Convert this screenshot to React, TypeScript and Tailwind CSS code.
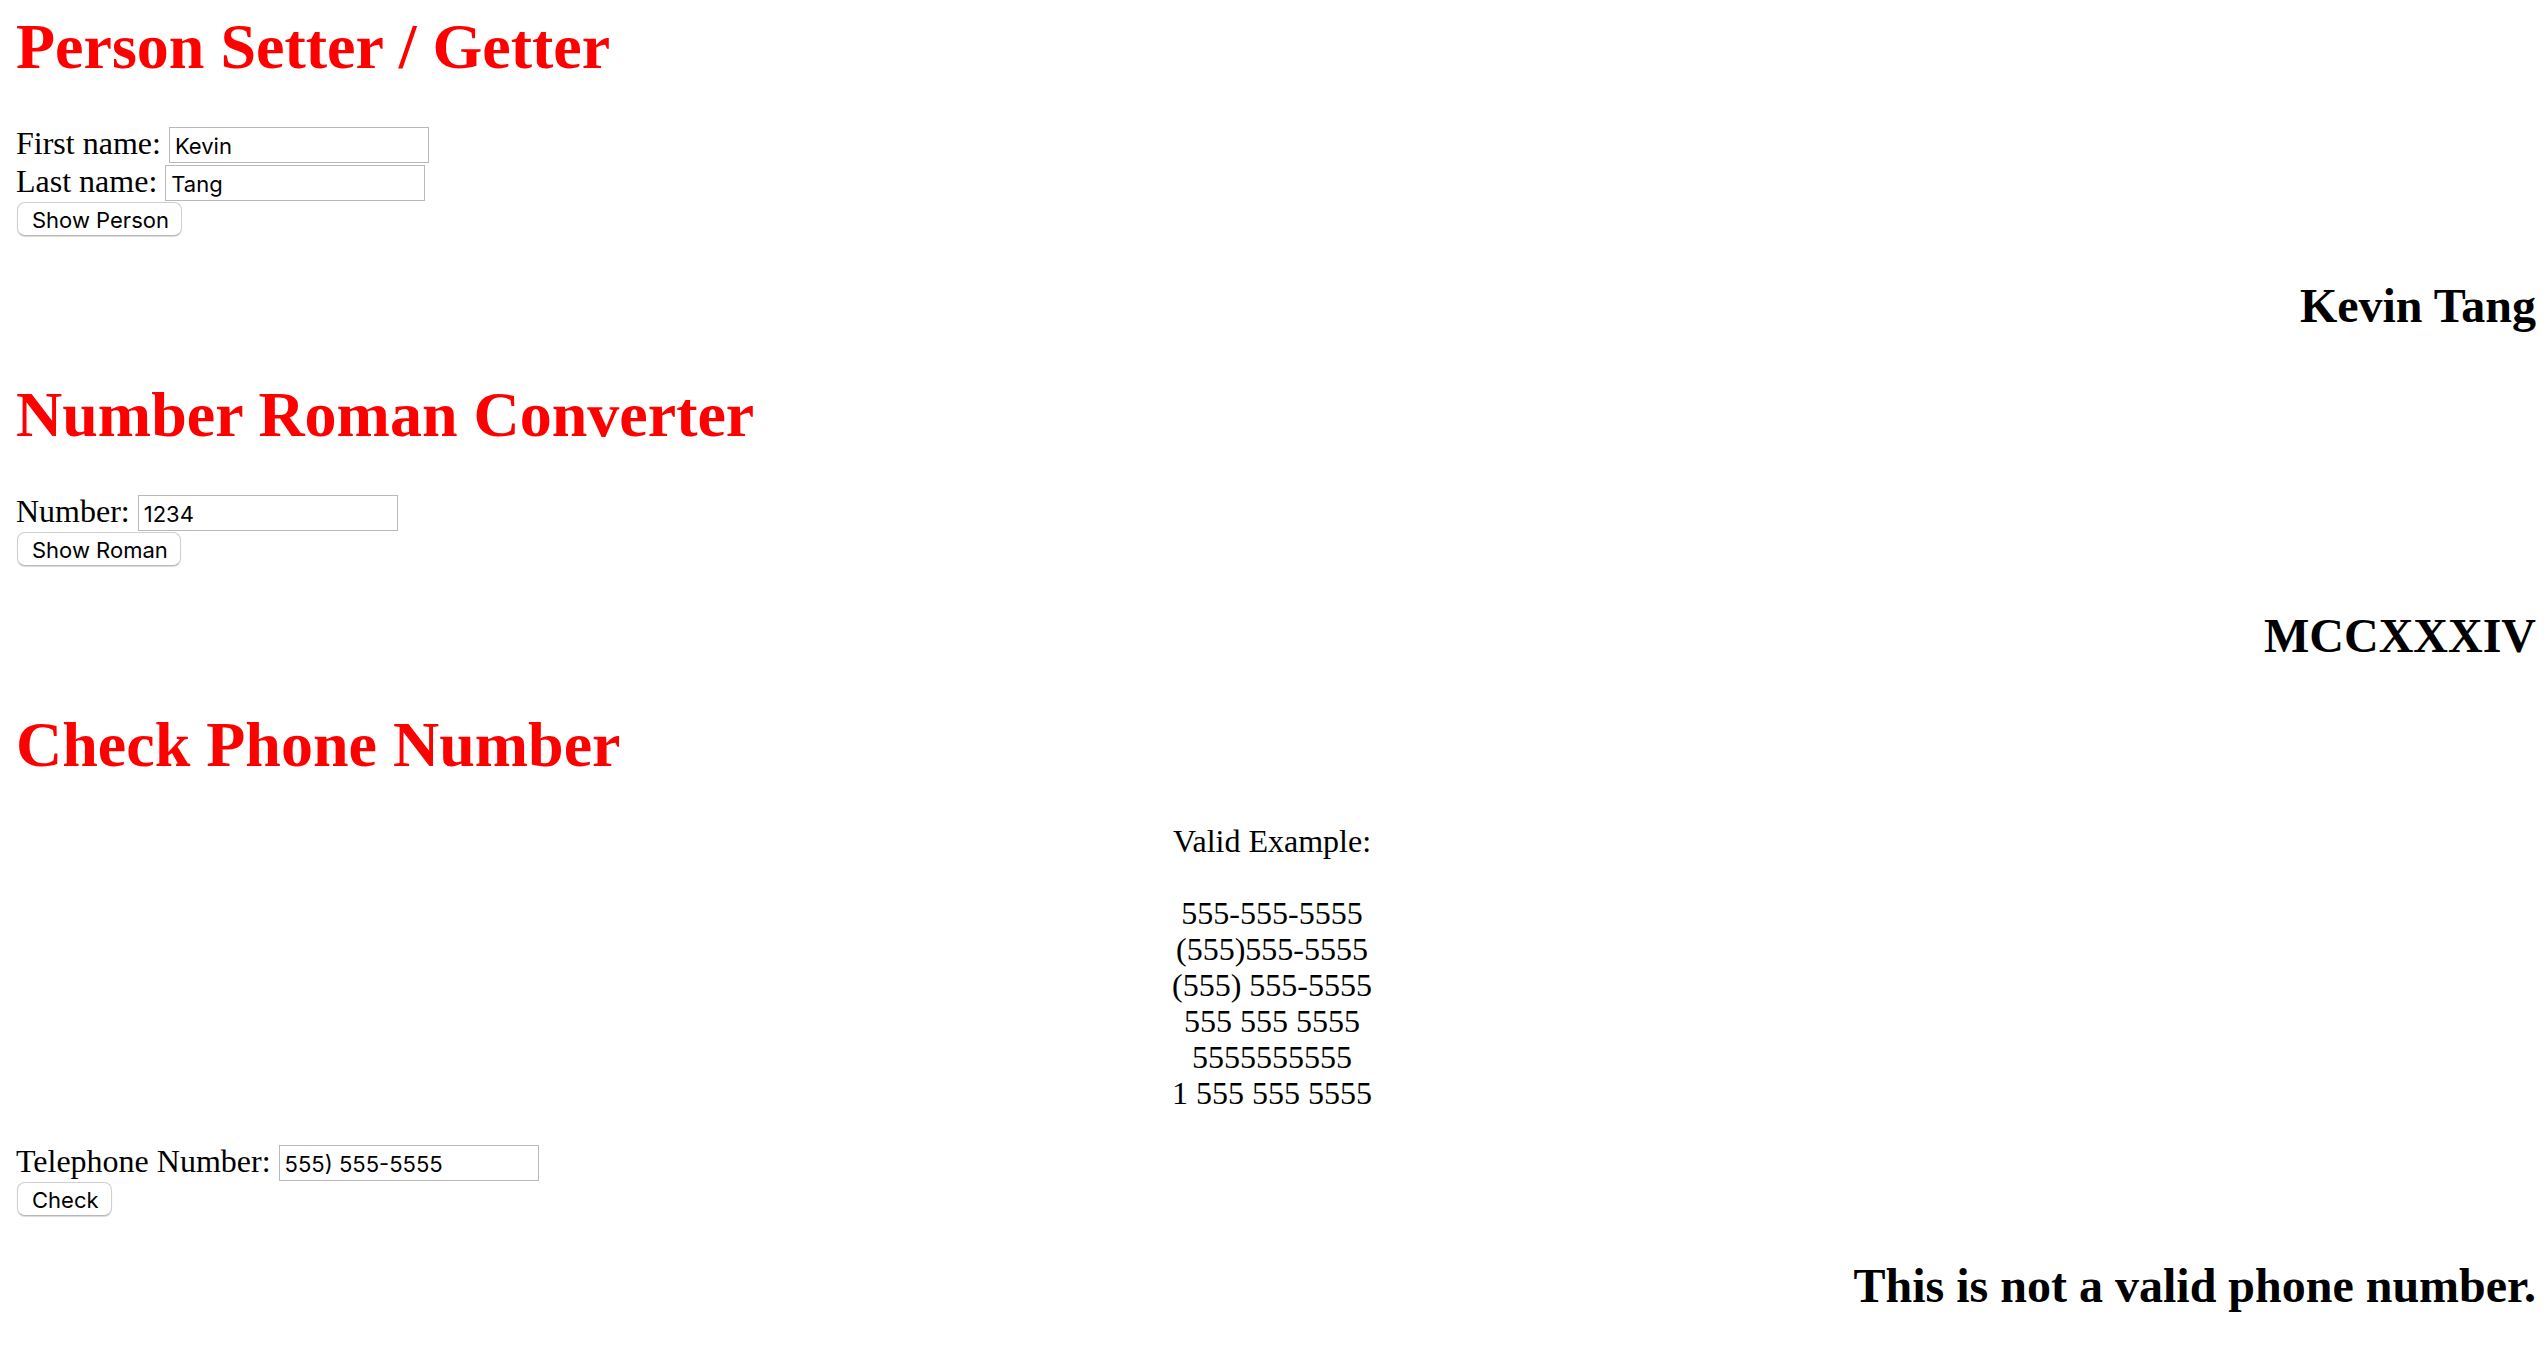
import { useState } from "react";
import type { ReactNode } from "react";

function Title({ children }: { children: ReactNode }) {
  return <h1 className="text-[64px] leading-[72px] font-bold text-[#ff0000]">{children}</h1>;
}

function Result({ children }: { children: ReactNode }) {
  return <h2 className="mt-[43px] mb-[46px] text-right text-5xl leading-[54px] font-bold">{children}</h2>;
}

function Field({ id, label, initial }: { id: string; label: string; initial: string }) {
  const [value, setValue] = useState(initial);
  return (
    <div className="flex h-[38px] items-center gap-2">
      <label htmlFor={id} className="pb-1 leading-9">
        {label}
      </label>
      <input
        id={id}
        type="text"
        value={value}
        onChange={(e) => setValue(e.target.value)}
        className="h-9 w-[260px] border border-[#b9b9b9] bg-white pt-0.5 pl-[5px] font-['Inter',sans-serif] text-[22px] text-black"
      />
    </div>
  );
}

function Action({ children }: { children: ReactNode }) {
  return (
    <button
      type="button"
      className="ml-px flex h-[34px] items-center rounded-lg border border-[#d0d0d0] border-b-[#b8b8b8] bg-white pt-0.5 pr-3 pl-[14px] font-['Inter',sans-serif] text-[22px] text-black shadow-[0_1px_1px_rgba(0,0,0,0.15)]"
    >
      {children}
    </button>
  );
}

const examples = [
  "555-555-5555",
  "(555)555-5555",
  "(555) 555-5555",
  "555 555 5555",
  "5555555555",
  "1 555 555 5555",
];

export default function App() {
  return (
    <main className="bg-white pt-[11px] pr-[10px] pl-4 font-['Liberation_Serif',serif] text-[32px] leading-9 text-black">
      <section>
        <Title>Person Setter / Getter</Title>
        <form className="mt-[43px]">
          <Field id="first" label="First name:" initial="Kevin" />
          <Field id="last" label="Last name:" initial="Tang" />
          <Action>Show Person</Action>
        </form>
        <Result>Kevin Tang</Result>
      </section>

      <section>
        <Title>Number Roman Converter</Title>
        <form className="mt-[43px]">
          <Field id="number" label="Number:" initial="1234" />
          <Action>Show Roman</Action>
        </form>
        <Result>MCCXXXIV</Result>
      </section>

      <section>
        <Title>Check Phone Number</Title>
        <div className="mt-[42px] mb-[33px] pr-2 text-center">
          <p className="mb-9">Valid Example:</p>
          <ul>
            {examples.map((e) => (
              <li key={e}>{e}</li>
            ))}
          </ul>
        </div>
        <form>
          <Field id="phone" label="Telephone Number:" initial="555) 555-5555" />
          <Action>Check</Action>
        </form>
        <Result>This is not a valid phone number.</Result>
      </section>
    </main>
  );
}
